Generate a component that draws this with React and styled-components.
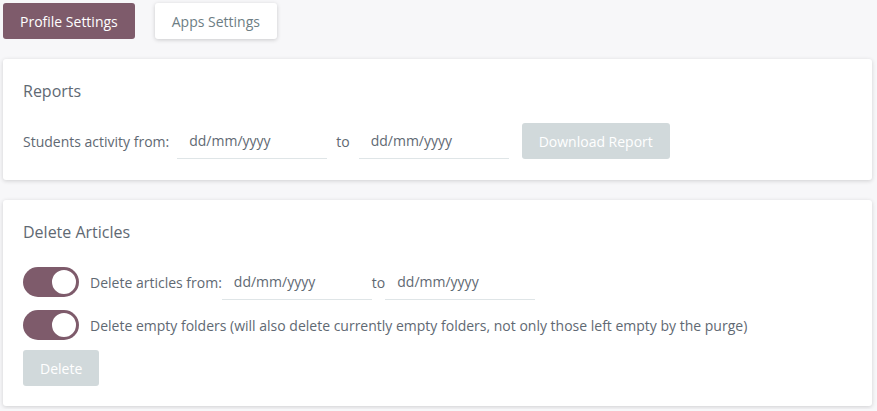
import React, { useState } from 'react';
import styled, { createGlobalStyle } from 'styled-components';

const GlobalStyle = createGlobalStyle`
  html, body {
    margin: 0;
    background: #f7f7f9;
    font-family: "Open Sans", "Noto Sans", sans-serif;
    color: #5f6973;
  }
  * { box-sizing: border-box; }
`;

const Page = styled.div`
  padding: 3px 5px 3px 3px;
  display: flex;
  flex-direction: column;
  gap: 20px;
`;

const Tabs = styled.div`
  display: flex;
  gap: 20px;
`;

const Tab = styled.button`
  height: 36px;
  padding: 0 17px;
  border: none;
  border-radius: 3px;
  font-family: inherit;
  font-size: 14px;
  cursor: pointer;
  background: ${({ active }) => (active ? '#7e5b6b' : '#fff')};
  color: ${({ active }) => (active ? '#fff' : '#6d7e84')};
  box-shadow: ${({ active }) => (active ? 'none' : '0 1px 4px rgba(0,0,0,0.18)')};
`;

const Card = styled.section`
  background: #fff;
  border-radius: 3px;
  box-shadow: 0 1px 4px rgba(0, 0, 0, 0.16);
  padding: 20px 20px ${({ bottom }) => bottom || 20}px;
`;

const Title = styled.h2`
  margin: 0 0 20px;
  font-size: 16px;
  font-weight: 400;
  line-height: 24px;
  color: #5f6973;
`;

const Row = styled.div`
  display: flex;
  align-items: center;
  font-size: 14px;
  margin-bottom: ${({ gap }) => gap || 0}px;
`;

const Label = styled.span`
  margin-right: ${({ space }) => space || 0}px;
  white-space: nowrap;
`;

const DateInput = styled.input`
  width: 150px;
  height: 36px;
  border: none;
  border-bottom: 1px solid #dfe5e7;
  padding: 0 12px;
  font-family: inherit;
  font-size: 14px;
  color: #5f6973;
  outline: none;
  background: transparent;
  &::placeholder { color: #5f6973; }
`;

const To = styled.span`
  padding: 0 ${({ pad }) => pad}px;
`;

const GreyButton = styled.button`
  height: 36px;
  padding: 0 17px;
  border: none;
  border-radius: 3px;
  background: #d1d9db;
  color: #fff;
  font-family: inherit;
  font-size: 14px;
  margin-left: ${({ ml }) => ml || 0}px;
`;

const Switch = styled.label`
  position: relative;
  width: 56px;
  height: 30px;
  border-radius: 15px;
  background: #7e5b6b;
  flex-shrink: 0;
  margin-right: 11px;
  cursor: pointer;
`;

const Knob = styled.span`
  position: absolute;
  top: 1px;
  right: 1px;
  width: 28px;
  height: 28px;
  border-radius: 50%;
  background: #fff;
  border: 2px solid #7e5b6b;
`;

const Toggle = ({ on, onClick }) => (
  <Switch onClick={onClick}>
    {on && <Knob />}
  </Switch>
);

export default function App() {
  const [a, setA] = useState(true);
  const [b, setB] = useState(true);
  return (
    <>
      <GlobalStyle />
      <Page>
        <Tabs>
          <Tab active>Profile Settings</Tab>
          <Tab>Apps Settings</Tab>
        </Tabs>

        <Card bottom={21}>
          <Title>Reports</Title>
          <Row>
            <Label space={8}>Students activity from:</Label>
            <DateInput placeholder="dd/mm/yyyy" />
            <To pad={9}>to</To>
            <DateInput placeholder="dd/mm/yyyy" />
            <GreyButton ml={13}>Download Report</GreyButton>
          </Row>
        </Card>

        <Card bottom={20}>
          <Title>Delete Articles</Title>
          <Row gap={10}>
            <Toggle on={a} onClick={() => setA(!a)} />
            <Label>Delete articles from:</Label>
            <DateInput placeholder="dd/mm/yyyy" />
            <To pad={0}>to</To>
            <DateInput placeholder="dd/mm/yyyy" />
          </Row>
          <Row gap={10}>
            <Toggle on={b} onClick={() => setB(!b)} />
            <Label>Delete empty folders (will also delete currently empty folders, not only those left empty by the purge)</Label>
          </Row>
          <GreyButton>Delete</GreyButton>
        </Card>
      </Page>
    </>
  );
}
